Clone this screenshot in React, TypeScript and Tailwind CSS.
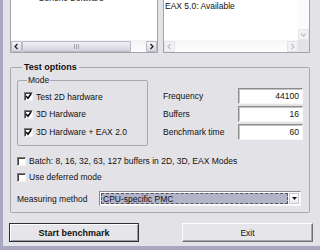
import React from "react";

const Check = ({ checked }: { checked: boolean }) => (
  <span className="w-[9px] h-[9px] bg-white border border-t-[#7a7a7a] border-l-[#7a7a7a] border-b-[#f4f4f4] border-r-[#f4f4f4] shadow-[inset_1px_1px_0_#404040] flex items-center justify-center shrink-0">
    {checked && (
      <svg width="7" height="7" viewBox="0 0 7 7">
        <path d="M1 3 L3 5.2 L6 1" stroke="#000" strokeWidth="1.5" fill="none" />
      </svg>
    )}
  </span>
);

const Field = ({ value }: { value: string }) => (
  <div className="w-[65px] h-[16px] bg-white border border-t-[#8c8c8c] border-l-[#8c8c8c] border-b-[#f6f6f6] border-r-[#f6f6f6] shadow-[inset_1px_1px_0_#c4c4c4] flex items-center justify-end pr-[3px] text-[8.5px] text-[#111]">
    {value}
  </div>
);

const ArrowBtn = ({ dir, disabled }: { dir: "l" | "r" | "d"; disabled?: boolean }) => {
  const c = disabled ? "#c2c2c6" : "#222";
  const d = dir === "l" ? "M5.5 2 L3 4.5 L5.5 7" : dir === "r" ? "M3.5 2 L6 4.5 L3.5 7" : "M2 3.5 L4.5 6 L7 3.5";
  return (
    <div
      className={
        disabled
          ? "w-[11px] h-[11px] shrink-0 rounded-[1px] border border-[#e4e4e8] bg-[#f2f2f4] flex items-center justify-center"
          : "w-[11px] h-[11px] shrink-0 rounded-[1px] border border-[#b9b9c6] bg-gradient-to-b from-[#f6f6f8] to-[#d6d6de] flex items-center justify-center"
      }
    >
      <svg width="9" height="9" viewBox="0 0 9 9">
        <path d={d} stroke={c} strokeWidth="1.3" fill="none" />
      </svg>
    </div>
  );
};

export default function App() {
  return (
    <div className="w-[320px] h-[250px] overflow-hidden bg-[#e3e2e7] border-l-[3px] border-b-[4px] border-[#a9a8c2] font-['Liberation_Sans',Arial,sans-serif] text-[8.5px] text-[#111] leading-[10px]">
      <div className="pl-[7px] flex flex-col">
        {/* Top list boxes */}
        <div className="flex gap-[5px] h-[53px]">
          <div className="w-[148px] h-[53px] bg-white border-l border-r border-b border-[#a3a3aa] flex flex-col">
            <div className="flex-1 overflow-hidden">
              <div className="-mt-[7px] pl-[27px] text-[#222]">Generic Software</div>
            </div>
            <div className="h-[12px] flex items-center bg-gradient-to-b from-[#f3f3f5] to-[#fdfdfd]">
              <ArrowBtn dir="l" />
              <div className="w-[109px] h-[11px] rounded-[1px] border border-[#b9b9c6] bg-gradient-to-b from-[#f2f2f5] to-[#d2d2dc] flex items-center justify-center">
                <div className="flex gap-[1px]">
                  <span className="w-[1px] h-[5px] bg-[#a8a8b4]" />
                  <span className="w-[1px] h-[5px] bg-[#a8a8b4]" />
                  <span className="w-[1px] h-[5px] bg-[#a8a8b4]" />
                </div>
              </div>
              <div className="flex-1" />
              <ArrowBtn dir="r" />
            </div>
          </div>
          <div className="w-[147px] h-[53px] bg-white border-l border-r border-b border-[#a3a3aa] flex flex-col">
            <div className="flex-1 flex overflow-hidden">
              <div className="flex-1 pl-[1px] text-[#111]">
                <div className="-mt-[9px]">EAX 4.0: Available</div>
                <div>EAX 5.0: Available</div>
              </div>
              <div className="w-[11px] flex flex-col justify-end bg-[#fbfbfc]">
                <ArrowBtn dir="d" disabled />
              </div>
            </div>
            <div className="h-[12px] flex items-center">
              <div className="flex-1 h-[12px] flex items-center bg-gradient-to-b from-[#f6f6f7] to-[#fefefe]">
                <ArrowBtn dir="l" disabled />
                <div className="flex-1" />
                <ArrowBtn dir="r" disabled />
              </div>
              <div className="w-[11px] h-[12px] bg-[#e3e2e7]" />
            </div>
          </div>
        </div>

        {/* Test options */}
        <fieldset className="mt-[9px] w-[300px] border border-[#a9a8ae] rounded-[2px] pl-[6px] pr-[6px] pb-[6px]">
          <legend className="ml-[5px] px-[2px] font-bold text-[9px] leading-[11px] text-[#111]">Test options</legend>
          <div className="flex items-start">
            <fieldset className="mt-[2px] w-[131px] border border-[#a9a8ae] rounded-[2px] pl-[6px] pb-[4px]">
              <legend className="ml-[3px] px-[1px] leading-[11px]">Mode</legend>
              <div className="flex flex-col pt-[2px]">
                <div className="h-[17px] flex items-center gap-[3px]">
                  <Check checked />
                  <span>Test 2D hardware</span>
                </div>
                <div className="h-[18px] flex items-center gap-[3px]">
                  <Check checked />
                  <span>3D Hardware</span>
                </div>
                <div className="h-[18px] flex items-center gap-[3px]">
                  <Check checked />
                  <span>3D Hardware + EAX 2.0</span>
                </div>
              </div>
            </fieldset>
            <div className="ml-[15px] mt-[15px] flex-1 flex flex-col gap-[2px]">
              <div className="h-[16px] flex items-center justify-between">
                <span>Frequency</span>
                <Field value="44100" />
              </div>
              <div className="h-[16px] flex items-center justify-between">
                <span>Buffers</span>
                <Field value="16" />
              </div>
              <div className="h-[16px] flex items-center justify-between">
                <span>Benchmark time</span>
                <Field value="60" />
              </div>
            </div>
          </div>
          <div className="mt-[8px] h-[14px] flex items-center gap-[3px]">
            <Check checked={false} />
            <span>Batch: 8, 16, 32, 63, 127 buffers in 2D, 3D, EAX Modes</span>
          </div>
          <div className="mt-[2px] h-[14px] flex items-center gap-[3px]">
            <Check checked={false} />
            <span>Use deferred mode</span>
          </div>
          <div className="mt-[7px] h-[15px] flex items-center">
            <span className="w-[82px]">Measuring method</span>
            <div className="w-[202px] h-[15px] bg-white border border-t-[#8c8c8c] border-l-[#8c8c8c] border-b-[#f6f6f6] border-r-[#f6f6f6] flex items-center p-[1px]">
              <div className="flex-1 h-full bg-[#b4b4c8] border border-dashed border-[#55555f] flex items-center pl-[1px] text-[#111]">
                CPU-specific PMC
              </div>
              <div className="w-[10px] h-full ml-[1px] bg-gradient-to-b from-[#ffffff] to-[#ececf0] border border-[#c8c8d0] flex items-center justify-center">
                <svg width="5" height="3" viewBox="0 0 5 3">
                  <path d="M0 0 H5 L2.5 3 Z" fill="#111" />
                </svg>
              </div>
            </div>
          </div>
        </fieldset>

        {/* Buttons */}
        <div className="mt-[10px] flex">
          <div className="-ml-[1px] w-[130px] h-[19px] border border-[#2e2e34] bg-[#e6e5ea] shadow-[inset_1px_1px_0_#ffffff,inset_-1px_-1px_0_#9d9ca4] flex items-center justify-center font-bold text-[9px]">
            Start benchmark
          </div>
          <div className="ml-[43px] w-[131px] h-[19px] border border-t-[#ffffff] border-l-[#ffffff] border-b-[#6f6f78] border-r-[#6f6f78] bg-[#e6e5ea] shadow-[inset_-1px_-1px_0_#a9a8b0] flex items-center justify-center">
            Exit
          </div>
        </div>
      </div>
    </div>
  );
}
